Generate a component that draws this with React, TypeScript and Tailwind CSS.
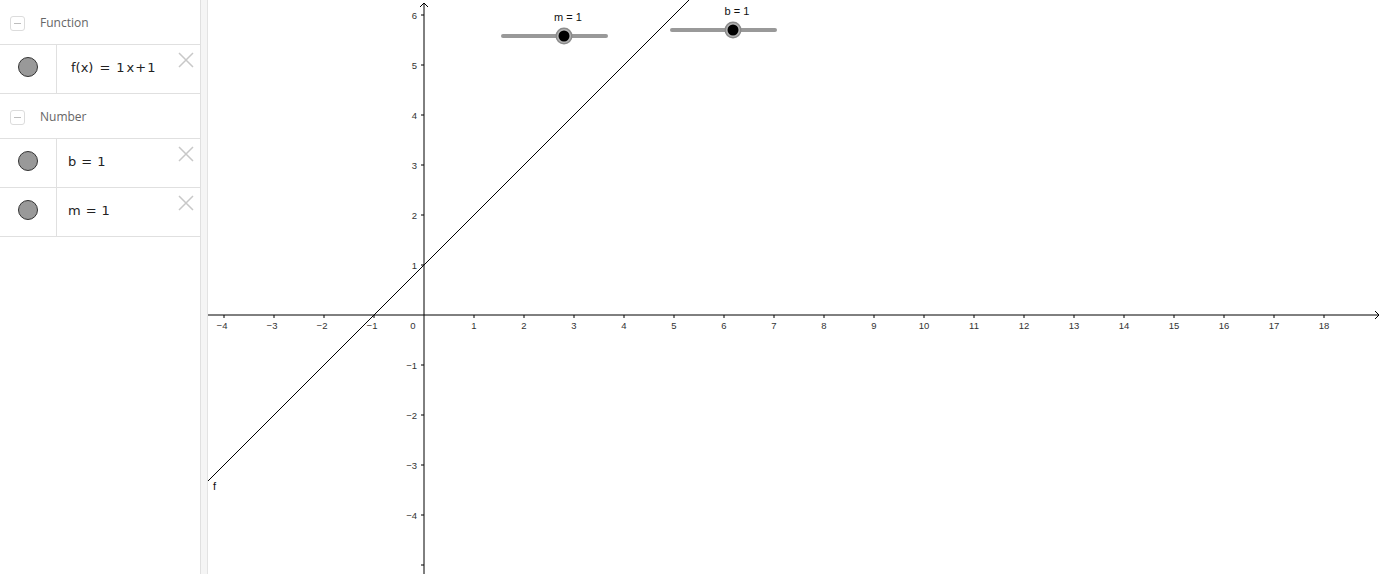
import React from "react";

const ox = 216; // origin x inside graph svg
const oy = 315;
const unit = 50;

function Header({ label }: { label: string }) {
  return (
    <div className="h-[45px] border-b border-[#e0e0e0] flex items-center pt-[3px]">
      <div className="ml-[10px] w-[15px] h-[15px] rounded-[3px] border border-[#dcdcdc] flex items-center justify-center">
        <div className="w-[7px] h-[1px] bg-[#bdbdbd]" />
      </div>
      <span className="ml-[15px] text-[12px] text-[#666] pb-[1px]" style={{ fontFamily: "'Open Sans', sans-serif" }}>
        {label}
      </span>
    </div>
  );
}

function CloseIcon() {
  return (
    <svg className="absolute right-[6px] top-[7px]" width="16" height="16" viewBox="0 0 16 16">
      <path d="M1 1 L15 15 M15 1 L1 15" stroke="#c8c8c8" strokeWidth="1.5" fill="none" />
    </svg>
  );
}

function Row({ children }: { children: React.ReactNode }) {
  return (
    <div className="relative h-[49px] border-b border-[#e0e0e0] flex">
      <div className="w-[57px] border-r border-[#e0e0e0] flex justify-center pt-[12px]">
        <div className="w-[20px] h-[20px] rounded-full bg-[#999] border border-[#333]" />
      </div>
      <div
        className="flex items-center pl-[11px] pb-[3px] text-[13px] text-[#222]"
        style={{ fontFamily: "'DejaVu Sans', sans-serif" }}
      >
        {children}
      </div>
      <CloseIcon />
    </div>
  );
}

function Slider({ x1, x2, y, knob, label }: { x1: number; x2: number; y: number; knob: number; label: string }) {
  return (
    <g>
      <text x={knob + 4} y={y - 15} fontSize="11" textAnchor="middle" fill="#111" fontFamily="'Liberation Sans', Arial, sans-serif">
        {label}
      </text>
      <line x1={x1} y1={y} x2={x2} y2={y} stroke="#999" strokeWidth="4" strokeLinecap="round" />
      <circle cx={knob} cy={y} r="8.5" fill="#8a8a8a" />
      <circle cx={knob} cy={y} r="7" fill="#b4b4b4" />
      <circle cx={knob} cy={y} r="5.5" fill="#000" />
    </g>
  );
}

function Graph() {
  const xs: number[] = [];
  for (let i = -4; i <= 18; i++) if (i !== 0) xs.push(i);
  const ys: number[] = [];
  for (let j = -5; j <= 6; j++) if (j !== 0) ys.push(j);
  const font = "'Liberation Sans', Arial, sans-serif";
  const fmt = (n: number) => (n < 0 ? "\u2212" + Math.abs(n) : String(n));
  return (
    <svg width="1174" height="574" className="block">
      {/* axes */}
      <line x1="0" y1={oy} x2="1171" y2={oy} stroke="#000" strokeWidth="1" />
      <path d={`M1167 ${oy - 4} L1171 ${oy} L1167 ${oy + 4}`} stroke="#000" fill="none" />
      <line x1={ox} y1="3" x2={ox} y2="574" stroke="#000" strokeWidth="1" />
      <path d={`M${ox - 4} 7 L${ox} 3 L${ox + 4} 7`} stroke="#000" fill="none" />
      {xs.map((i) => {
        const px = ox + i * unit;
        return (
          <g key={"x" + i}>
            <line x1={px} y1={oy} x2={px} y2={oy + 3} stroke="#000" />
            <text x={px - (i < 0 ? 2 : 0)} y={oy + 14} fontSize="9.5" textAnchor="middle" fill="#333" fontFamily={font}>
              {fmt(i)}
            </text>
          </g>
        );
      })}
      <text x={ox - 11} y={oy + 14} fontSize="9.5" textAnchor="middle" fill="#333" fontFamily={font}>
        0
      </text>
      {ys.map((j) => {
        const py = oy - j * unit;
        return (
          <g key={"y" + j}>
            <line x1={ox - 3} y1={py} x2={ox} y2={py} stroke="#000" />
            {j > -5 && (
              <text x={ox - 7} y={py + 3.5} fontSize="9.5" textAnchor="end" fill="#333" fontFamily={font}>
                {fmt(j)}
              </text>
            )}
          </g>
        );
      })}
      {/* f(x) = x + 1 */}
      <line x1="0" y1="481" x2="481" y2="0" stroke="#000" strokeWidth="1" />
      <text x="5" y="490" fontSize="11" fill="#111" fontFamily={font}>
        f
      </text>
      <Slider x1={295} x2={398} y={36} knob={356} label="m = 1" />
      <Slider x1={464} x2={567} y={30} knob={525} label="b = 1" />
    </svg>
  );
}

export default function App() {
  return (
    <div className="w-[1382px] h-[574px] flex overflow-hidden bg-white">
      <div className="w-[201px] shrink-0 border-r border-[#e0e0e0]">
        <Header label="Function" />
        <Row>
          <span className="ml-[3px]">f(x)</span>
          <span className="mx-[6px]">=</span>
          <span>1</span>
          <span className="ml-[2px]">x</span>
          <span className="mx-[1px]">+</span>
          <span>1</span>
        </Row>
        <Header label="Number" />
        <Row>
          <span>b</span>
          <span className="mx-[5px]">=</span>
          <span>1</span>
        </Row>
        <Row>
          <span>m</span>
          <span className="mx-[5px]">=</span>
          <span>1</span>
        </Row>
      </div>
      <div className="w-[7px] shrink-0 bg-[#f5f5f5] border-r border-[#e3e3e3]" />
      <Graph />
    </div>
  );
}
